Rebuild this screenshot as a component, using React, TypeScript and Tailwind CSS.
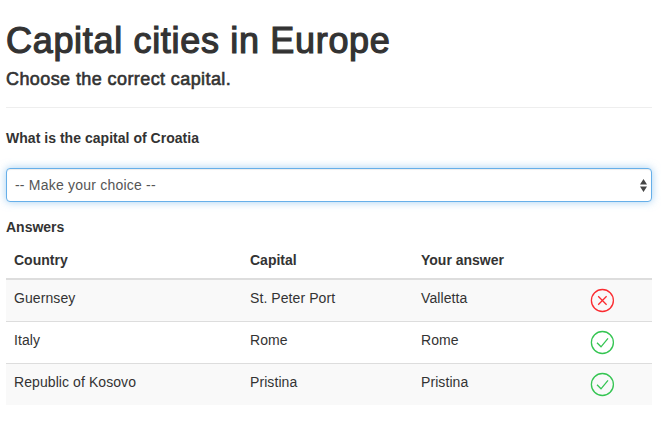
import React from 'react';

type Answer = { country: string; capital: string; answer: string };

const answers: Answer[] = [
  { country: 'Guernsey', capital: 'St. Peter Port', answer: 'Valletta' },
  { country: 'Italy', capital: 'Rome', answer: 'Rome' },
  { country: 'Republic of Kosovo', capital: 'Pristina', answer: 'Pristina' },
];

function ResultIcon({ correct }: { correct: boolean }) {
  return (
    <svg
      className={correct ? 'block text-[#35c552]' : 'block text-[#fb2c31]'}
      width="25"
      height="25"
      viewBox="0 0 25 25"
      fill="none"
      stroke="currentColor"
      strokeWidth="1.3"
    >
      <circle cx="12.4" cy="12.5" r="11" />
      {correct ? <path d="M7 12.8L11 16.8L18 8.3" /> : <path d="M8.2 8.3L16.6 16.7M16.6 8.3L8.2 16.7" />}
    </svg>
  );
}

export default function App() {
  return (
    <main className="h-[430px] bg-white pl-1.5 pr-[9px] pt-[21px] font-['Liberation_Sans',Arial,sans-serif] text-sm leading-5 text-[#333]">
      <h1 className="text-4xl leading-10 tracking-[0.68px] whitespace-nowrap [-webkit-text-stroke:1.2px_#333]">
        <span>Capital cities in Europe</span>
      </h1>
      <h4 className="mt-2 text-lg leading-5 tracking-[0.41px] whitespace-nowrap [-webkit-text-stroke:0.6px_#333]">
        <span>Choose the correct capital.</span>
      </h4>
      <hr className="mt-[18px] border-t border-[#eee]" />
      <label htmlFor="capital" className="mt-5 block font-bold tracking-[0.03px]">
        <span>What is the capital of Croatia</span>
      </label>
      <div className="mt-5 flex h-[34px] items-center justify-between rounded border border-[#66afe9] bg-white pl-2 pr-1 text-[#555] shadow-[inset_0_1px_1px_rgba(0,0,0,0.075),0_0_8px_rgba(102,175,233,0.6)]">
        <button id="capital" type="button" className="flex-1 text-left tracking-[0.21px]">
          <span>-- Make your choice --</span>
        </button>
        <svg width="7" height="13" viewBox="0 0 7 13" fill="#444">
          <path d="M3.5 0L7 5.5H0ZM0 7.5H7L3.5 13Z" />
        </svg>
      </div>
      <h5 className="mt-[15px] font-bold">
        <span>Answers</span>
      </h5>
      <table className="mt-[5px] w-full table-fixed border-separate border-spacing-0 text-left">
        <colgroup>
          <col className="w-[236px]" />
          <col className="w-[171px]" />
          <col className="w-[169px]" />
          <col />
        </colgroup>
        <thead>
          <tr className="h-[38px] align-top [&>th]:border-b-2 [&>th]:border-[#ddd] [&>th]:px-2 [&>th]:pt-2">
            <th><span>Country</span></th>
            <th><span>Capital</span></th>
            <th><span>Your answer</span></th>
            <th />
          </tr>
        </thead>
        <tbody>
          {answers.map((row) => (
            <tr
              key={row.country}
              className="h-[42px] align-top tracking-[0.08px] odd:bg-[#f9f9f9] first:h-[41px] [&>td]:border-t [&>td]:border-[#ddd] [&>td]:px-2 [&>td]:pt-2 first:[&>td]:border-t-0"
            >
              <td><span>{row.country}</span></td>
              <td><span>{row.capital}</span></td>
              <td><span>{row.answer}</span></td>
              <td><ResultIcon correct={row.capital === row.answer} /></td>
            </tr>
          ))}
        </tbody>
      </table>
    </main>
  );
}
